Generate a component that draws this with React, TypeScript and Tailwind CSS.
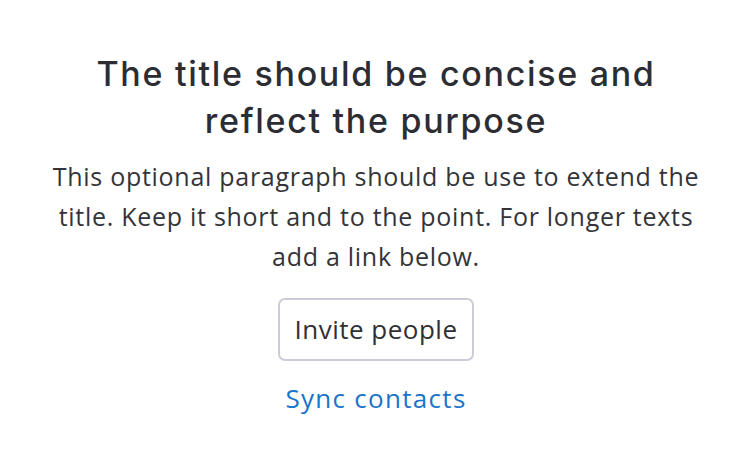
export default function App() {
  return (
    <div className="w-[752px] h-[465px] bg-white flex flex-col items-center pt-[50px]">
      <h1 className="w-[640px] text-center text-[34px] leading-[47px] font-medium text-[#2c2d33] font-['Inter',sans-serif] tracking-[1.7px]">
        The title should be concise and reflect the purpose
      </h1>
      <p className="mt-[12px] w-[660px] text-center text-[25px] leading-[40px] text-[#333438] font-['Open_Sans',sans-serif] tracking-[0.72px]">
        This optional paragraph should be use to extend the title. Keep it short and to the point. For longer texts add a link below.
      </p>
      <button className="mt-[22px] h-[63px] px-[14px] rounded-[7px] border-2 border-[#cbccd8] bg-white text-[26px] text-[#2f3034] font-['Open_Sans',sans-serif] tracking-[0.5px]">
        Invite people
      </button>
      <a className="mt-[20px] text-[26px] leading-[34px] text-[#1b74c9] font-['Open_Sans',sans-serif] tracking-[1.3px]">Sync contacts</a>
    </div>
  );
}
